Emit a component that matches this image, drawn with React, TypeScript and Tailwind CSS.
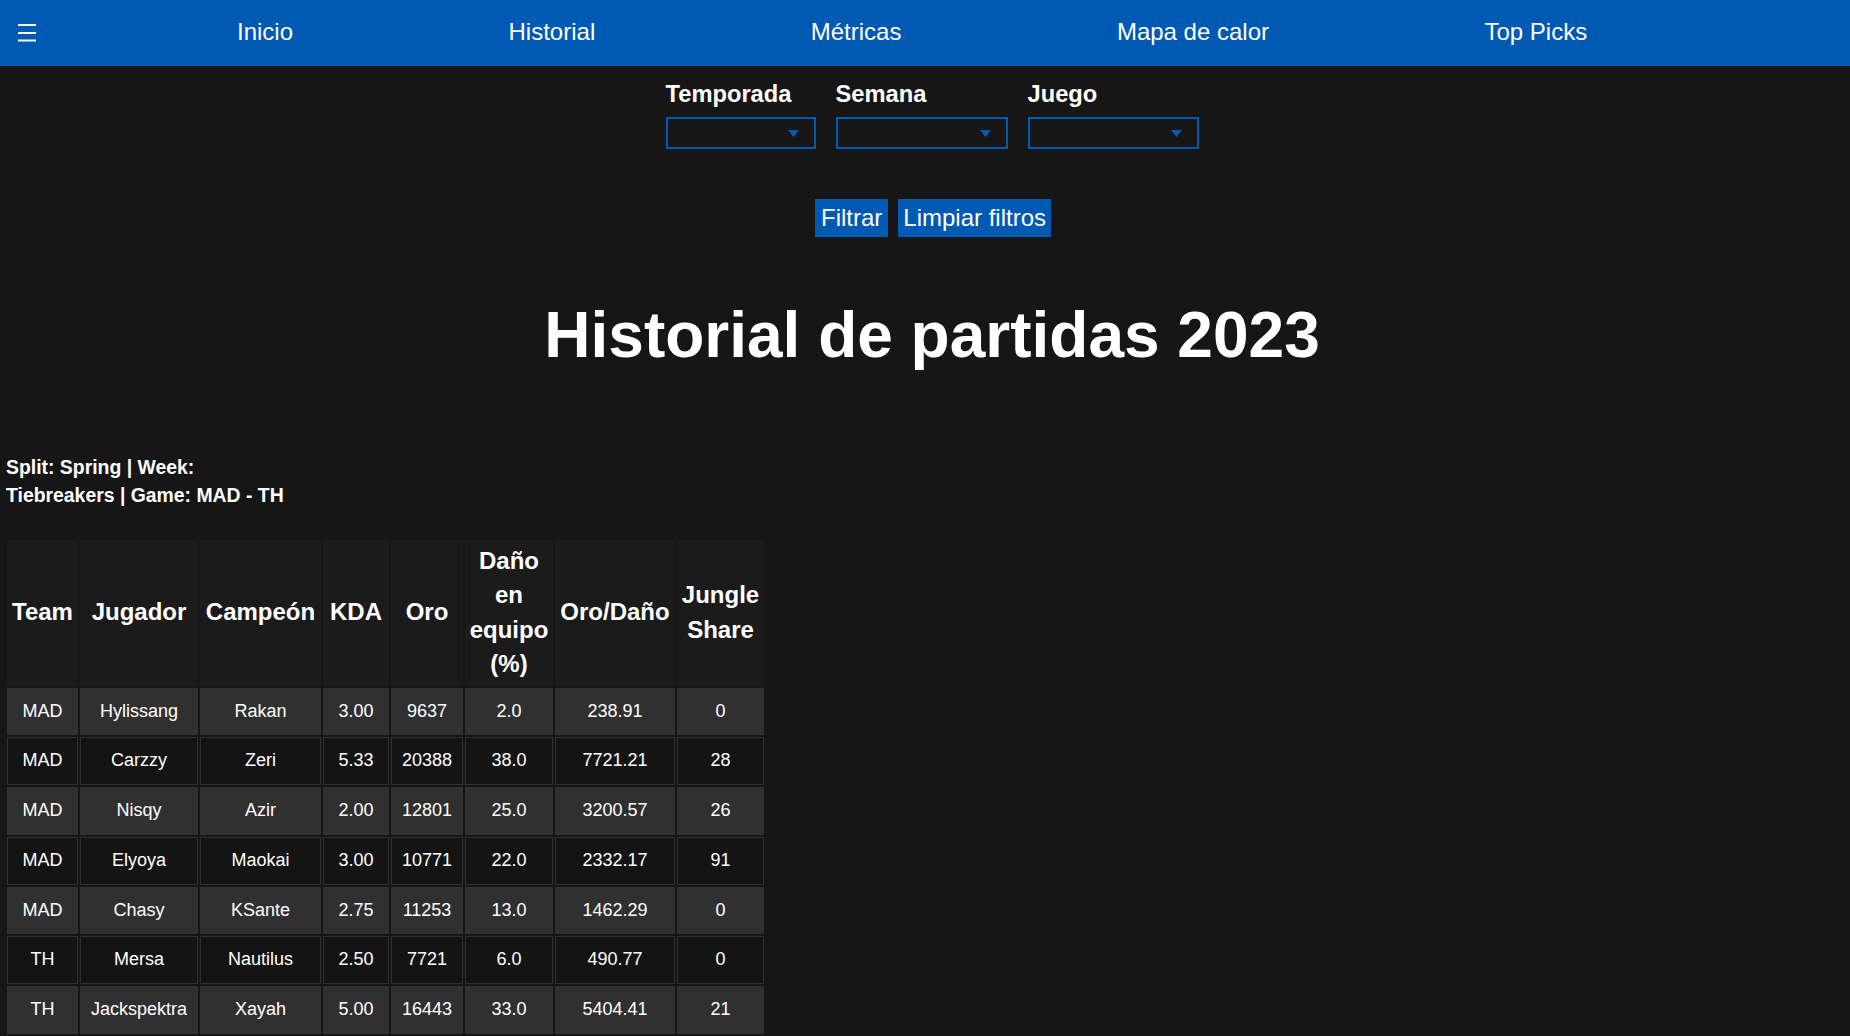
import React from 'react'

const navItems = ['Inicio', 'Historial', 'Métricas', 'Mapa de calor', 'Top Picks']

const filters = [
  { label: 'Temporada', width: 'w-[150px]' },
  { label: 'Semana', width: 'w-[172px]' },
  { label: 'Juego', width: 'w-[171px]' },
]

const headers = ['Team', 'Jugador', 'Campeón', 'KDA', 'Oro', 'Daño en equipo (%)', 'Oro/Daño', 'Jungle Share']
const colWidths = [71, 118, 121, 66, 72, 88, 120, 87]

const rows = [
  ['MAD', 'Hylissang', 'Rakan', '3.00', '9637', '2.0', '238.91', '0'],
  ['MAD', 'Carzzy', 'Zeri', '5.33', '20388', '38.0', '7721.21', '28'],
  ['MAD', 'Nisqy', 'Azir', '2.00', '12801', '25.0', '3200.57', '26'],
  ['MAD', 'Elyoya', 'Maokai', '3.00', '10771', '22.0', '2332.17', '91'],
  ['MAD', 'Chasy', 'KSante', '2.75', '11253', '13.0', '1462.29', '0'],
  ['TH', 'Mersa', 'Nautilus', '2.50', '7721', '6.0', '490.77', '0'],
  ['TH', 'Jackspektra', 'Xayah', '5.00', '16443', '33.0', '5404.41', '21'],
]

function SelectBox({ width }: { width: string }) {
  return (
    <div className={`${width} h-[32px] border-2 border-[#0059b3] bg-[#161616] flex items-center justify-end pr-[15px]`}>
      <svg width="11" height="7" viewBox="0 0 11 7">
        <path d="M0 0h11L5.5 7z" fill="#0059b3" />
      </svg>
    </div>
  )
}

export default function App() {
  return (
    <div className="min-h-screen bg-[#161616] text-white font-['Liberation_Sans',Arial,sans-serif]">
      {/* navbar */}
      <nav className="h-[66px] bg-[#0059b3] flex items-center pb-[3px]">
        <svg className="ml-[18px] mt-[2px]" width="18" height="18" viewBox="0 0 18 18">
          <rect x="0" y="0" width="18" height="2" fill="#fff" />
          <rect x="0" y="8" width="18" height="2" fill="#fff" />
          <rect x="0" y="15.5" width="18" height="2" fill="#fff" />
        </svg>
        <ul className="flex ml-[201px] gap-[215.5px] text-[24px] leading-[28px]">
          {navItems.map((item) => (
            <li key={item} className="whitespace-nowrap">{item}</li>
          ))}
        </ul>
      </nav>

      <div className="pl-[14px] flex flex-col items-center">
        {/* filters */}
        <div className="flex gap-[20px] pt-[15px]">
          {filters.map((f) => (
            <div key={f.label} className="flex flex-col">
              <label className="text-[23.7px] leading-[26px] font-bold mb-[10px]">{f.label}</label>
              <SelectBox width={f.width} />
            </div>
          ))}
        </div>

        <div className="flex gap-[10px] mt-[50px] ml-[2px]">
          <button className="h-[38px] px-[6px] bg-[#0059b3] text-white text-[24px] leading-[28px]">Filtrar</button>
          <button className="h-[38px] px-[5px] bg-[#0059b3] text-white text-[24px] leading-[28px]">Limpiar filtros</button>
        </div>

        <h1 className="mt-[62px] text-[64px] font-bold leading-[73.5px]">Historial de partidas 2023</h1>
      </div>

      <div className="mt-[80px] pl-[6px] text-[19.4px] font-bold leading-[28px]">
        Split: Spring | Week:
        <br />
        Tiebreakers | Game: MAD - TH
      </div>

      <table className="mt-[29px] ml-[5px] table-fixed border-separate border-spacing-[2px] w-[761px] text-center">
        <colgroup>
          {colWidths.map((w, i) => (
            <col key={i} style={{ width: w }} />
          ))}
        </colgroup>
        <thead>
          <tr>
            {headers.map((h) => (
              <th key={h} className="bg-[#1b1b1b] px-[3px] py-[4px] text-[24px] leading-[34.5px] font-bold">
                {h}
              </th>
            ))}
          </tr>
        </thead>
        <tbody>
          {rows.map((r, i) => (
            <tr key={i}>
              {r.map((c, j) => (
                <td
                  key={j}
                  className={`border border-[#303030] py-[12px] px-[2px] text-[18px] leading-[21.75px] ${i % 2 === 0 ? 'bg-[#303030]' : 'bg-[#141414]'}`}
                >
                  {c}
                </td>
              ))}
            </tr>
          ))}
        </tbody>
      </table>
    </div>
  )
}
